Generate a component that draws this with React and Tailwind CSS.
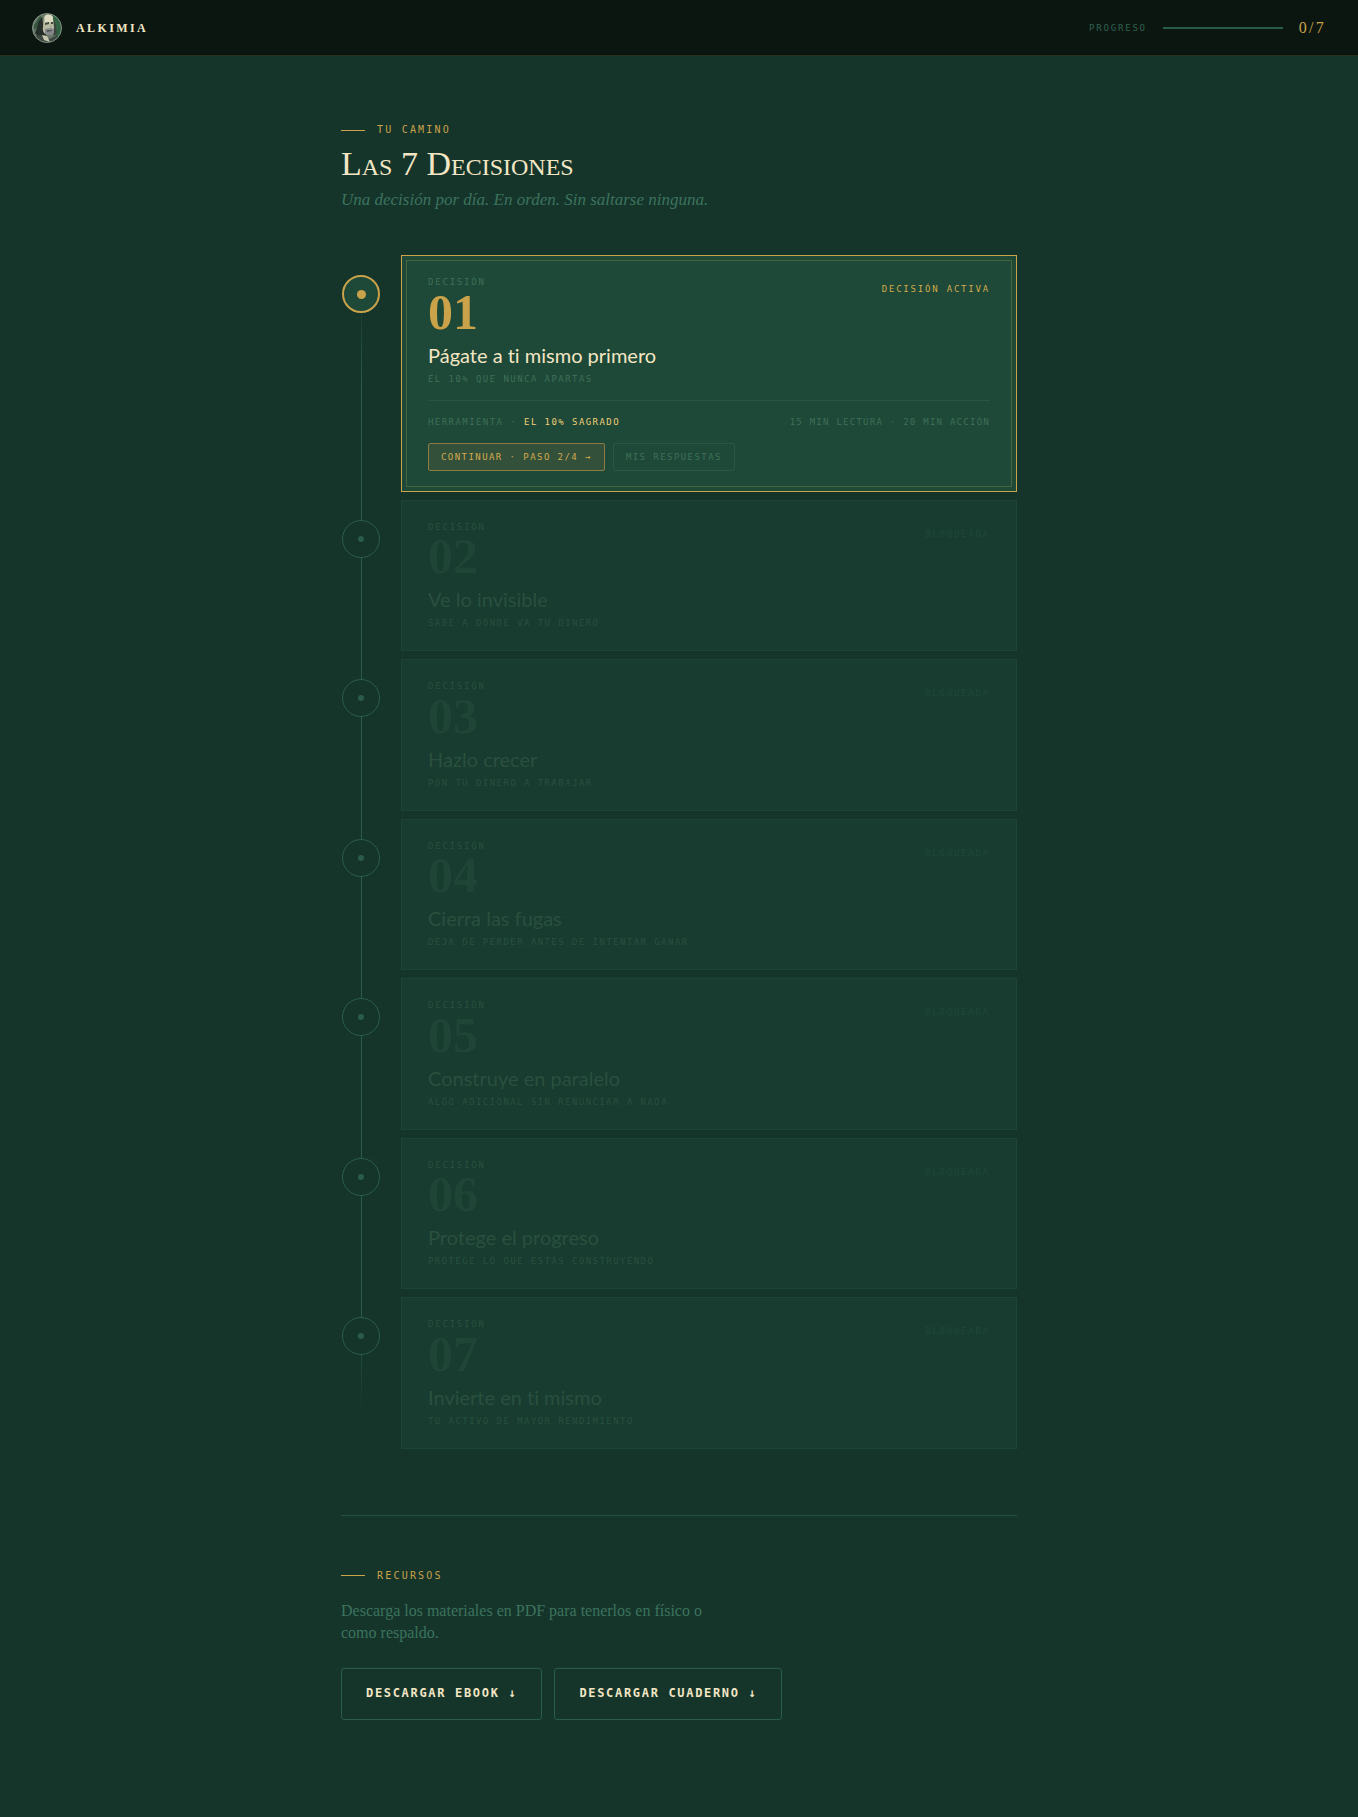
import React from 'react';

const decisions = [
  { number: '01', title: 'Págate a ti mismo primero', subtitle: 'EL 10% QUE NUNCA APARTAS', active: true },
  { number: '02', title: 'Ve lo invisible', subtitle: 'SABE A DÓNDE VA TU DINERO' },
  { number: '03', title: 'Hazlo crecer', subtitle: 'PON TU DINERO A TRABAJAR' },
  { number: '04', title: 'Cierra las fugas', subtitle: 'DEJA DE PERDER ANTES DE INTENTAR GANAR' },
  { number: '05', title: 'Construye en paralelo', subtitle: 'ALGO ADICIONAL SIN RENUNCIAR A NADA' },
  { number: '06', title: 'Protege el progreso', subtitle: 'PROTEGE LO QUE ESTÁS CONSTRUYENDO' },
  { number: '07', title: 'Invierte en ti mismo', subtitle: 'TU ACTIVO DE MAYOR RENDIMIENTO' },
];

function Logo() {
  return (
    <svg viewBox="0 0 30 30" className="size-[30px]" aria-hidden="true">
      <defs>
        <clipPath id="logo-clip">
          <circle cx="15" cy="15" r="14.5" />
        </clipPath>
      </defs>
      <g clipPath="url(#logo-clip)">
        <rect width="30" height="30" fill="#69786a" />
        <path d="M20 1c7 3 10 8 10 14 0 6-2 9-5 11l-3-8z" fill="#2f6342" />
        <path d="M2 12l6-9 3 2-4 8-5 4z" fill="#35573f" />
        <path d="M10 5C5 8 6 14 3 20l4 5 8-1-3-9z" fill="#252e28" />
        <path d="M21 6c3 3 3 9 4 14l-3 3-3-7z" fill="#3a453c" />
        <path d="M2 23l8-1 7 4 8-4 5 8H0z" fill="#3d4840" />
        <path d="M12 4c2-3 7-3 9 1l1 9c0 5-2 8-5 8-4 0-7-3-6-8z" fill="#b9bba2" />
        <path d="M13 3c2-2 6-2 8 1l0 5-8 0z" fill="#dcdbc2" />
        <path d="M13 10l4-1v2l-4 1zm6-1l2 0v2l-2 0z" fill="#414a41" />
        <path d="M18 11l1 4-2 1 3 0z" fill="#7c8272" />
        <path d="M13 16c3-1 6-1 9 0l0 4c-2 3-7 3-9 0z" fill="#85878b" />
        <path d="M15 17l5 0v1l-5 1z" fill="#50584f" />
        <path d="M10 22l5 1 3 6-6-2z" fill="#c9c9b1" />
      </g>
      <circle cx="15" cy="15" r="14.5" fill="none" stroke="#7d8f80" />
    </svg>
  );
}

function Header() {
  return (
    <header className="flex h-14 items-center justify-between border-b border-[#2b3020] bg-[#0c1611] px-8">
      <a href="#inicio" className="flex items-center gap-3.5">
        <Logo />
        <span className="font-['Liberation_Serif',serif] text-[12px] leading-5 font-bold tracking-[0.2em] text-[#f3e6c4]">
          ALKIMIA
        </span>
      </a>
      <div className="flex items-center gap-4">
        <span id="progreso" className="text-[9px] leading-3.5 tracking-[0.2em] text-[#2f6150]">PROGRESO</span>
        <div
          role="progressbar"
          aria-labelledby="progreso"
          aria-valuenow={0}
          aria-valuemin={0}
          aria-valuemax={7}
          className="h-0.5 w-[120px] bg-[#285c4a]"
        />
        <span className="font-['Liberation_Serif',serif] text-[16px] leading-5 tracking-[0.14em] text-[#c9a24a]">0/7</span>
      </div>
    </header>
  );
}

function Eyebrow({ children }) {
  return (
    <div className="flex items-center gap-3 text-[10px] leading-5 tracking-[0.22em] text-[#c9a24a]">
      <span className="h-px w-6 bg-[#c9a24a]" />
      {children}
    </div>
  );
}

function Node({ active }) {
  return (
    <div className="relative w-10 shrink-0 pt-5">
      <div
        className={
          active
            ? 'mx-auto flex size-[38px] items-center justify-center rounded-full border-2 border-[#c9a24a] bg-[#1e4837]'
            : 'mx-auto flex size-[38px] items-center justify-center rounded-full border border-[#2a5c4b] bg-[#15352b]'
        }
      >
        <span className={active ? 'size-[9px] rounded-full bg-[#c9a24a]' : 'size-1.5 rounded-full bg-[#2a5c4b]'} />
      </div>
    </div>
  );
}

function DecisionCard({ decision }) {
  const { number, title, subtitle, active } = decision;

  return (
    <article
      className={
        active
          ? 'relative flex-1 border border-[#c9a24a] bg-[#1e4837] px-[26px] py-5'
          : 'relative flex-1 border border-[#1d4536] bg-[#1e4837]/40 px-[26px] py-5'
      }
    >
      {active && <div className="pointer-events-none absolute inset-1 border border-[#48643d]" />}

      <div className="flex items-start justify-between">
        <div>
          <p className={active ? 'text-[9px] leading-normal tracking-[0.2em] text-[#3d7058]' : 'text-[9px] leading-normal tracking-[0.2em] text-[#285040]'}>
            DECISIÓN
          </p>
          <p
            className={
              active
                ? "mt-1 font-['Liberation_Serif',serif] text-[50px] leading-9 font-bold text-[#c9a24a]"
                : "mt-1 font-['Liberation_Serif',serif] text-[50px] leading-9 font-bold text-[#1e4536]"
            }
          >
            {number}
          </p>
        </div>
        <span
          className={
            active
              ? 'mt-1.5 text-[9px] leading-3.5 tracking-[0.2em] text-[#d3aa4d]'
              : 'mt-1.5 text-[9px] leading-3.5 tracking-[0.2em] text-[#1e4838]'
          }
        >
          {active ? 'DECISIÓN ACTIVA' : 'BLOQUEADA'}
        </span>
      </div>

      <h2
        className={
          active
            ? 'mt-3 font-[Lato,sans-serif] text-[20px] leading-[26px] text-[#f3e6c4] [font-variant-ligatures:none]'
            : 'mt-3 font-[Lato,sans-serif] text-[20px] leading-[26px] text-[#29503f] [font-variant-ligatures:none]'
        }
      >
        {title}
      </h2>
      <p className={active ? 'mt-1 text-[9px] leading-3.5 tracking-[0.16em] text-[#3d7058]' : 'mt-1 text-[9px] leading-3.5 tracking-[0.16em] text-[#285040]'}>
        {subtitle}
      </p>

      {active && (
        <>
          <div className="mt-3.5 flex justify-between border-t border-[#285443] pt-3.5 text-[9px] leading-3.5 text-[#3d7058]">
            <p className="tracking-[0.16em]">
              HERRAMIENTA · <strong className="font-normal text-[#f0cf78]">EL 10% SAGRADO</strong>
            </p>
            <p className="tracking-[0.14em]">15 MIN LECTURA · 20 MIN ACCIÓN</p>
          </div>
          <div className="mt-3.5 flex gap-2 text-[9px] leading-3.5 tracking-[0.16em]">
            <button type="button" className="h-7 rounded-xs border border-[#8e7b41] bg-[#33513a] px-3 text-[#d3aa4d]">
              CONTINUAR · PASO 2/4 →
            </button>
            <button type="button" className="h-7 rounded-xs border border-[#285845] px-3 text-[#3d7058]">
              MIS RESPUESTAS
            </button>
          </div>
        </>
      )}
    </article>
  );
}

function DownloadLink({ href, children }) {
  return (
    <a
      href={href}
      className="rounded-[3px] border border-[#2a5c4b] px-6 pt-3.5 pb-4 text-[12px] leading-5 font-bold tracking-[0.14em] text-[#f3e6c4]"
    >
      {children}
    </a>
  );
}

export default function App() {
  return (
    <div className="min-h-screen bg-[#15352b] bg-[repeating-linear-gradient(0deg,transparent_0px,transparent_29px,rgba(255,255,255,0.006)_29px,rgba(255,255,255,0.006)_30px)] font-['DejaVu_Sans_Mono',monospace]">
      <Header />
      <main className="mx-auto max-w-[740px] px-8 pt-16 pb-24">
        <Eyebrow>TU CAMINO</Eyebrow>
        <h1 className="mt-1.5 font-['Liberation_Serif',serif] text-[34px] leading-9 text-[#f3e6c4] [font-variant-caps:small-caps]">
          Las 7 Decisiones
        </h1>
        <p className="mt-1.5 font-['Liberation_Serif',serif] text-[17px] leading-6 text-[#3c735d] italic">
          Una decisión por día. En orden. Sin saltarse ninguna.
        </p>

        <ol className="relative mt-[43px] flex flex-col gap-2">
          {/* Línea vertical que une los nodos */}
          <div
            aria-hidden="true"
            className="absolute top-10 bottom-10 left-5 w-px bg-[linear-gradient(to_bottom,transparent,#2a5c4b_8%,#2a5c4b_92%,transparent)]"
          />
          {decisions.map((decision) => (
            <li key={decision.number} className="flex gap-5">
              <Node active={decision.active} />
              <DecisionCard decision={decision} />
            </li>
          ))}
        </ol>

        <section className="mt-[66px] border-t border-[#245140] pt-[50px]">
          <Eyebrow>RECURSOS</Eyebrow>
          <p className="mt-3.5 max-w-[380px] font-['Liberation_Serif',serif] text-[16px] leading-[22px] text-[#3c735d]">
            Descarga los materiales en PDF para tenerlos en físico o como respaldo.
          </p>
          <div className="mt-6 flex flex-wrap gap-3">
            <DownloadLink href="#ebook">DESCARGAR EBOOK ↓</DownloadLink>
            <DownloadLink href="#cuaderno">DESCARGAR CUADERNO ↓</DownloadLink>
          </div>
        </section>
      </main>
    </div>
  );
}
